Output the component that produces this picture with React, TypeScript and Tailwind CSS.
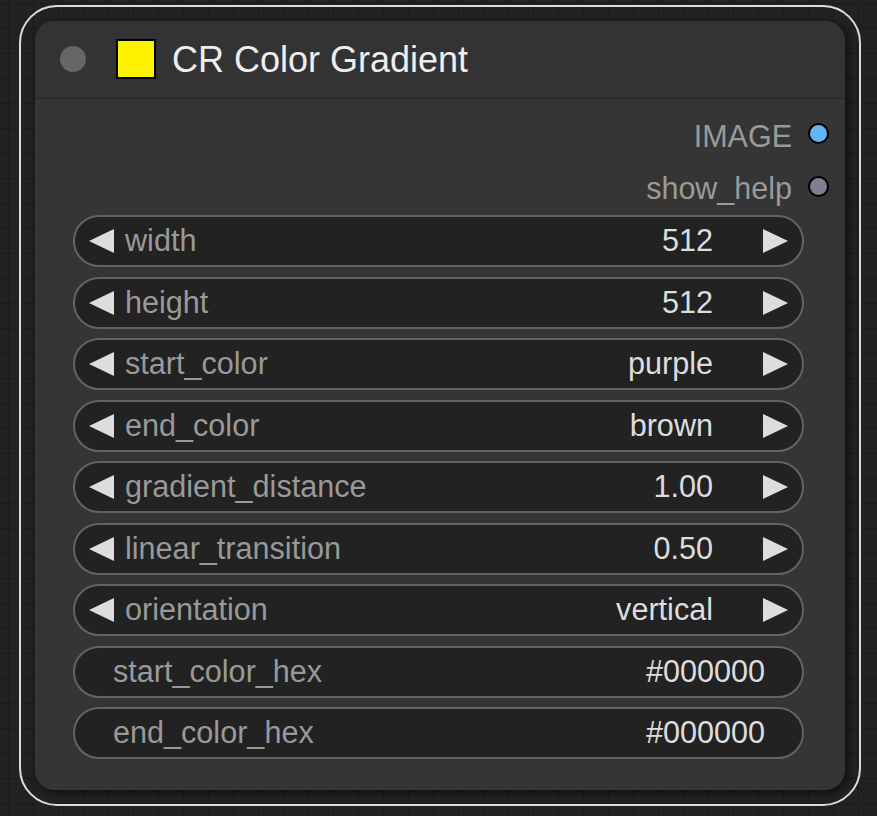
import React from "react";

const font = { fontFamily: '"Liberation Sans", Arial, sans-serif' };

function LeftArrow() {
  return (
    <svg width="25" height="24" viewBox="0 0 25 24" className="shrink-0">
      <polygon points="25,0 25,24 0,12" fill="#dddddd" />
    </svg>
  );
}
function RightArrow() {
  return (
    <svg width="25" height="24" viewBox="0 0 25 24" className="shrink-0">
      <polygon points="0,0 0,24 25,12" fill="#dddddd" />
    </svg>
  );
}

const combos: [string, string][] = [
  ["width", "512"],
  ["height", "512"],
  ["start_color", "purple"],
  ["end_color", "brown"],
  ["gradient_distance", "1.00"],
  ["linear_transition", "0.50"],
  ["orientation", "vertical"],
];

const texts: [string, string][] = [
  ["start_color_hex", "#000000"],
  ["end_color_hex", "#000000"],
];

export default function App() {
  return (
    <div
      className="w-[877px] h-[816px] overflow-hidden bg-[#222222] bg-[linear-gradient(to_right,#1b1b1b_1px,transparent_1px),linear-gradient(to_bottom,#1b1b1b_1px,transparent_1px)] bg-[size:25px_25px] bg-[position:8px_3px] pt-[5px] pl-[19px]"
      style={font}
    >
      <div className="w-[842px] h-[801px] rounded-[38px] border-2 border-[#dcdcdc] p-[14px]">
        <div className="w-[810px] h-[769px] rounded-[20px] bg-[#353535] shadow-[3px_3px_8px_rgba(0,0,0,0.55)] flex flex-col overflow-hidden">
          {/* title */}
          <div className="h-[78px] flex items-center bg-[#333333] border-b-2 border-[#2c2c2c] shrink-0">
            <div className="ml-[25px] w-[26px] h-[26px] rounded-full bg-[#666666]" />
            <div className="ml-[30px] w-[40px] h-[40px] bg-[#fff200] border-2 border-black" />
            <div className="ml-[16px] text-[36px] text-[#eeeeee] leading-none pt-[2px]">
              CR Color Gradient
            </div>
          </div>
          {/* outputs */}
          <div className="flex flex-col mt-[11px]">
            <div className="h-[52px] flex items-center justify-end pr-[16px]">
              <span className="text-[30.5px] text-[#9a9a9a] leading-none">IMAGE</span>
              <div className="ml-[16px] w-[21px] h-[21px] rounded-full bg-[#64b5f6] border-2 border-black -translate-y-[3px]" />
            </div>
            <div className="h-[52px] flex items-center justify-end pr-[16px]">
              <span className="text-[30.5px] text-[#9a9a9a] leading-none">show_help</span>
              <div className="ml-[16px] w-[21px] h-[21px] rounded-full bg-[#7f7f93] border-2 border-black -translate-y-[2px]" />
            </div>
          </div>
          {/* widgets */}
          <div className="flex flex-col gap-[9.5px] ml-[38px] w-[731px] mt-[1px]">
            {combos.map(([label, value]) => (
              <div
                key={label}
                className="h-[52px] rounded-[26px] border-2 border-[#636363] bg-[#222222] flex items-center pl-[14px] pr-[14px] text-[30.6px]"
              >
                <LeftArrow />
                <span className="ml-[11px] text-[#999999]">{label}</span>
                <span className="ml-auto text-[#dddddd]">{value}</span>
                <span className="ml-[50px]">
                  <RightArrow />
                </span>
              </div>
            ))}
            {texts.map(([label, value]) => (
              <div
                key={label}
                className="h-[52px] rounded-[26px] border-2 border-[#636363] bg-[#222222] flex items-center pl-[38px] pr-[37px] text-[30.6px]"
              >
                <span className="text-[#999999]">{label}</span>
                <span className="ml-auto text-[#dddddd]">{value}</span>
              </div>
            ))}
          </div>
        </div>
      </div>
    </div>
  );
}
